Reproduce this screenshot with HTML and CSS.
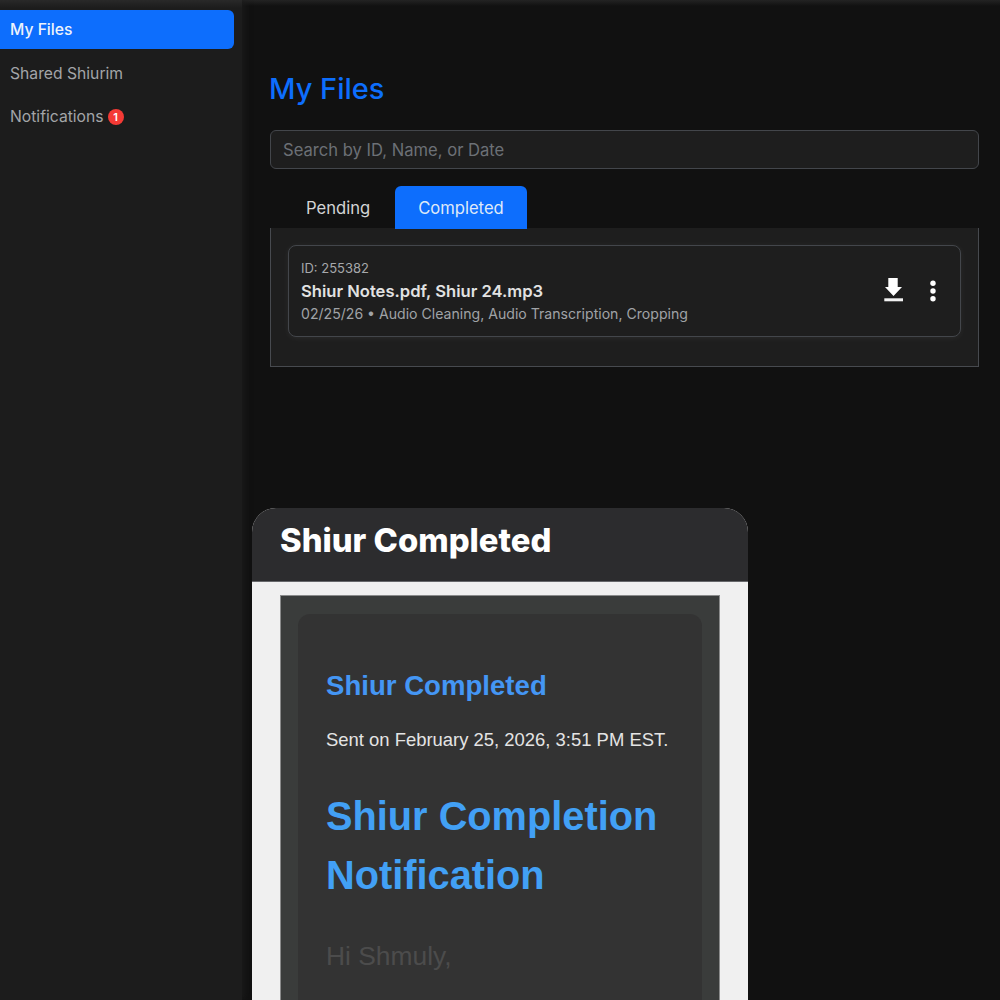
FILE: index.html
```html
<!DOCTYPE html>
<html lang="en">
<head>
    <meta charset="UTF-8">
    <meta name="viewport" content="width=device-width, initial-scale=1.0">
    <title>My Files</title>
    <link rel="stylesheet" href="styles.css">
</head>
<body>
    <div class="app">
        <nav class="sidebar">
            <a class="nav-item active">My Files</a>
            <a class="nav-item">Shared Shiurim</a>
            <a class="nav-item">Notifications <span class="badge">1</span></a>
        </nav>
        <main class="main">
            <h1>My Files</h1>
            <div class="search">Search by ID, Name, or Date</div>
            <div class="tabs">
                <div class="tab">Pending</div>
                <div class="tab active">Completed</div>
            </div>
            <div class="panel">
                <div class="file-card">
                    <div class="file-info">
                        <div class="file-id">ID: 255382</div>
                        <div class="file-name">Shiur Notes.pdf, Shiur 24.mp3</div>
                        <div class="file-meta">02/25/26 • Audio Cleaning, Audio Transcription, Cropping</div>
                    </div>
                    <div class="file-actions">
                        <svg class="icon-download" width="20" height="26" viewBox="0 0 20 26">
                            <path d="M4.3 0h9.4v9H18l-8.500 9L1 9h3.300z" fill="#fff"/>
                            <rect x="0.300" y="20.300" width="18.700" height="3" fill="#f2f2f2"/>
                        </svg>
                        <svg class="icon-more" width="6" height="22" viewBox="0 0 6 22">
                            <circle cx="3" cy="3.300" r="2.700" fill="#fff"/>
                            <circle cx="3" cy="11" r="2.700" fill="#fff"/>
                            <circle cx="3" cy="18.700" r="2.700" fill="#fff"/>
                        </svg>
                    </div>
                </div>
            </div>
        </main>
        <div class="modal">
            <div class="modal-header">Shiur Completed</div>
            <div class="modal-body">
                <div class="mail">
                    <div class="mail-card">
                        <div class="mail-subject">Shiur Completed</div>
                        <div class="mail-date">Sent on February 25, 2026, 3:51 PM EST.</div>
                        <div class="mail-title">Shiur Completion Notification</div>
                        <div class="mail-greeting">Hi Shmuly,</div>
                    </div>
                </div>
            </div>
        </div>
    </div>
</body>
</html>
```

FILE: styles.css
```css
* {
    box-sizing: border-box;
}
body {
    margin: 0;
    font-family: Inter, "Noto Sans", sans-serif;
    background-color: #111;
}
.app {
    display: flex;
    height: 1000px;
    overflow: hidden;
    position: relative;
}
.sidebar {
    width: 242px;
    flex-shrink: 0;
    padding-top: 10px;
    padding-right: 8px;
    background: linear-gradient(#292929, #1c1c1c 8px);
    box-shadow: 2px 0 7px #1c1c1c;
    display: flex;
    flex-direction: column;
    gap: 4.500px;
    position: relative;
    z-index: 1;
}
.nav-item {
    height: 39px;
    padding-left: 10px;
    display: flex;
    align-items: center;
    font-size: 15.700px;
    color: #a3a5a8;
    border-radius: 0 6px 6px 0;
}
.nav-item.active {
    background: #0d6efd;
    color: #eef3fb;
    font-weight: 500;
}
.badge {
    width: 16px;
    height: 16px;
    margin-left: 4px;
    border-radius: 50%;
    background: #f43a35;
    color: #fff;
    font-size: 11px;
    font-weight: 600;
    display: flex;
    align-items: center;
    justify-content: center;
}
.main {
    flex: 1;
    padding: 0 21px 0 28px;
    background: linear-gradient(#232323, #111 6px);
}
h1 {
    margin: 71px 0 0 -1px;
    height: 59px;
    font-size: 29px;
    line-height: 36px;
    font-weight: 500;
    color: #0d6efd;
}
.search {
    height: 39px;
    padding-left: 12px;
    display: flex;
    align-items: center;
    font-size: 16.600px;
    color: #6c7076;
    background: #1e1e1e;
    border: 1px solid #43464b;
    border-radius: 6px;
}
.tabs {
    display: flex;
    gap: 0.500px;
    margin-top: 17px;
    height: 42px;
    padding-left: 12px;
    position: relative;
    z-index: 1;
}
.tab {
    height: 43px;
    padding: 0 24px;
    display: flex;
    align-items: center;
    font-size: 16.600px;
    color: #d4d5d6;
    border-radius: 6px 6px 0 0;
}
.tab.active {
    background: #0d6efd;
    color: #dfe9f8;
    padding: 0 23.500px;
}
.panel {
    height: 139px;
    padding: 17px 17px;
    background: #1e1e1e;
    border: 1px solid #474a4f;
    border-top: none;
}
.file-card {
    height: 92px;
    padding: 0 24px 0 12px;
    display: flex;
    align-items: center;
    justify-content: space-between;
    background: #1e1e1e;
    border: 1px solid #43464b;
    border-radius: 8px;
    box-shadow: 0 1px 6px rgba(255, 255, 255, 0.06);
}
.file-id {
    font-size: 13px;
    line-height: 22px;
    color: #a6a8ab;
}
.file-name {
    font-size: 16.600px;
    line-height: 24px;
    font-weight: 600;
    color: #e2e2e2;
}
.file-meta {
    font-size: 14.100px;
    line-height: 22px;
    color: #a0a3a7;
}
.file-actions {
    display: flex;
    align-items: center;
    gap: 26px;
}
.modal {
    position: absolute;
    left: 252px;
    top: 508px;
    width: 496px;
    height: 520px;
    background: #f0f0f0;
    border-radius: 24px 24px 0 0;
    overflow: hidden;
    z-index: 2;
}
.modal-header {
    height: 74px;
    padding: 14px 0 0 28px;
    font-size: 32.800px;
    line-height: 36px;
    font-weight: 800;
    color: #fff;
    background: #2c2c2e;
    border-bottom: 1px solid #66676a;
}
.modal-body {
    padding: 13px 28px 0;
}
.mail {
    padding: 18px 17px 0;
    background: #3a3c3b;
    border: 1px solid #8a8b8b;
    border-bottom: none;
    height: 500px;
}
.mail-card {
    height: 480px;
    padding: 56px 28px 0;
    background: #333;
    border-radius: 12px;
    font-family: "Liberation Sans", Arial, sans-serif;
}
.mail-subject {
    font-size: 27.600px;
    line-height: 32px;
    font-weight: 700;
    color: #4496f4;
}
.mail-date {
    margin-top: 26px;
    font-size: 18.450px;
    line-height: 24px;
    color: #e4e4e4;
}
.mail-title {
    margin-top: 35px;
    font-size: 39.750px;
    line-height: 59px;
    font-weight: 700;
    color: #42a0f5;
}
.mail-greeting {
    margin-top: 35px;
    font-size: 26.400px;
    line-height: 32px;
    color: #4c4c4c;
}
```
